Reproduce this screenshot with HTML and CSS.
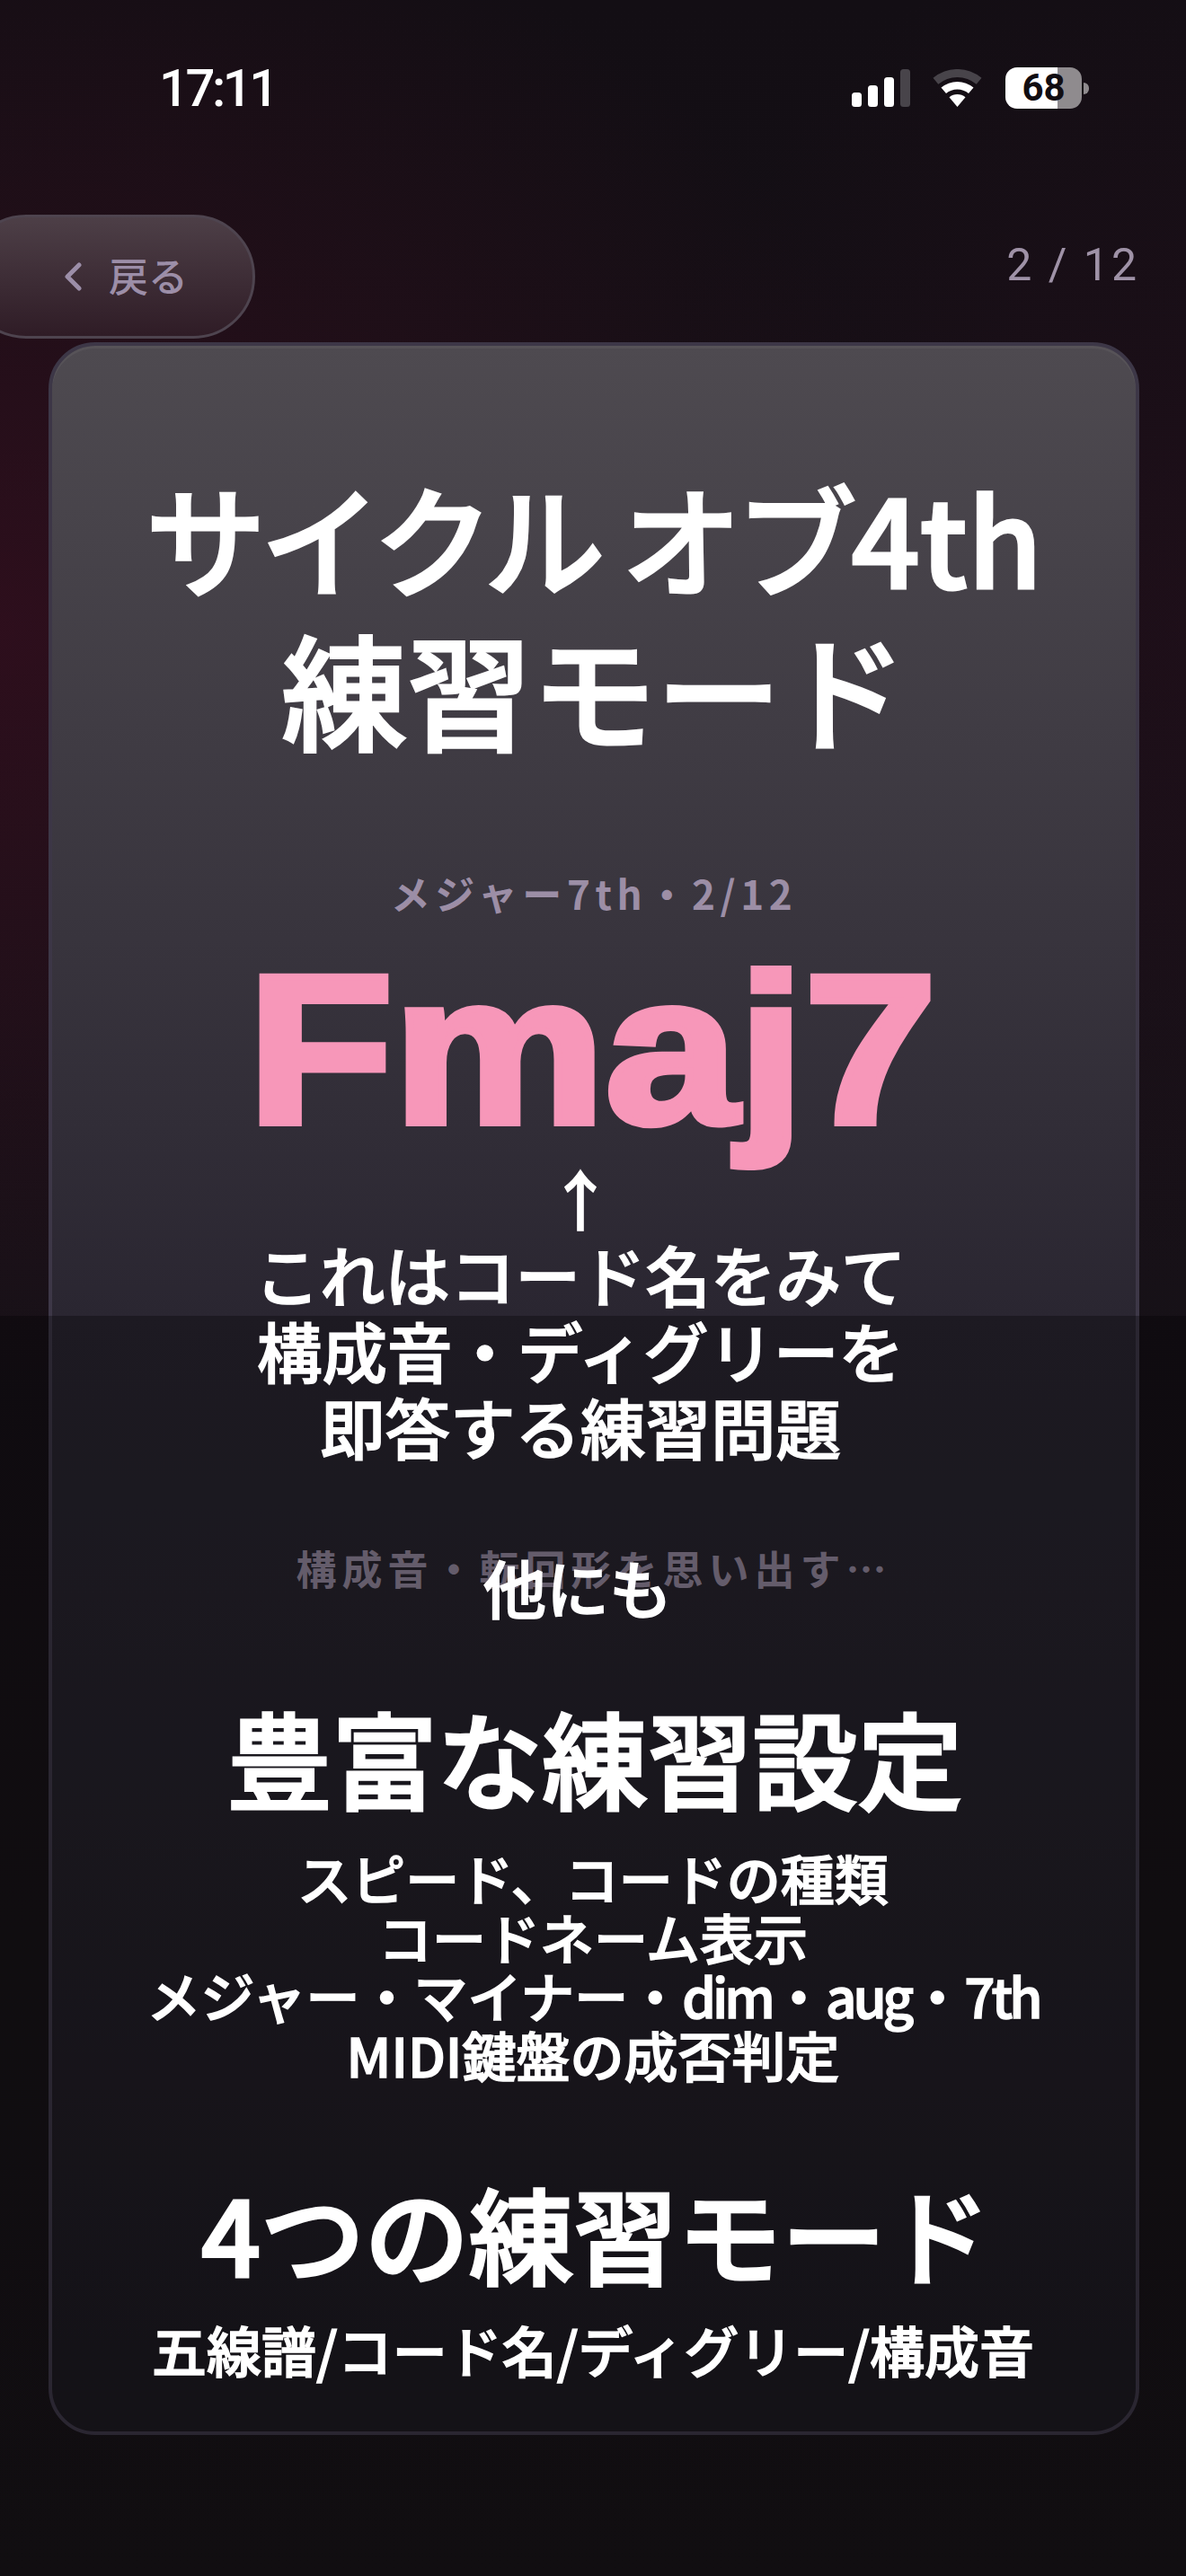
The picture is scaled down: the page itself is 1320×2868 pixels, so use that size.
FILE: index.html
```html
<!DOCTYPE html>
<html lang="ja">
<head>
<meta charset="utf-8">
<title>サイクルオブ4th 練習モード</title>
<link rel="stylesheet" href="styles.css">
</head>
<body>
<div class="page">
  <header class="status">
    <span class="time">17:11</span>
    <div class="status-icons">
      <svg class="signal" viewBox="0 0 65 42" aria-hidden="true">
        <rect x="0" y="26" width="11" height="16" rx="3.5" fill="#fff"/>
        <rect x="18" y="18" width="11" height="24" rx="3.5" fill="#fff"/>
        <rect x="36" y="9" width="11" height="33" rx="3.5" fill="#fff"/>
        <rect x="54" y="0" width="11" height="42" rx="3.5" fill="#48444a"/>
      </svg>
      <svg class="wifi" viewBox="0 0 55 42" aria-hidden="true">
        <path d="M.5 9.8A42 42 0 0 1 54.5 9.8L48.7 16.7A33 33 0 0 0 6.3 16.7Z" fill="#48444a"/>
        <path d="M9.5 20.6A28 28 0 0 1 45.5 20.6L40 27.1A19.5 19.5 0 0 0 15 27.1Z" fill="#fff"/>
        <path d="M18.5 31.3A14 14 0 0 1 36.5 31.3L27.5 42Z" fill="#fff"/>
      </svg>
      <div class="battery"><span class="battery-level">68</span></div>
    </div>
  </header>

  <nav class="nav">
    <button class="back" type="button">
      <svg class="chevron" viewBox="0 0 20 32" aria-hidden="true"><path d="M17 3 4 16l13 13" fill="none" stroke="currentColor" stroke-width="5" stroke-linecap="round" stroke-linejoin="round"/></svg>
      <span class="back-label">戻る</span>
    </button>
    <span class="counter">2 / 12</span>
  </nav>

  <main class="card">
    <h1 class="title"><span class="title-one"><span class="tight">サイクル オブ</span>4th</span><br>練習モード</h1>
    <p class="sub">メジャー7th・2/12</p>
    <p class="chord"><span class="chord-name">Fmaj7</span></p>
    <p class="prompt">構成音・転回形を思い出す…</p>
  </main>

  <div class="dim"></div>

  <div class="captions">
    <p class="cap cap-explain">↑<br>これはコード名をみて<br>構成音・ディグリーを<br>即答する練習問題</p>
    <p class="cap cap-also">他にも</p>
    <p class="cap cap-head">豊富な練習設定</p>
    <p class="cap cap-list">スピード、コードの種類<br>コードネーム表示<br>メジャー・マイナー・<span class="latin">dim</span>・<span class="latin">aug</span>・<span class="latin">7th</span><br>MIDI鍵盤の成否判定</p>
    <p class="cap cap-head cap-head-modes">4つの練習モード</p>
    <p class="cap cap-modes">五線譜/コード名/ディグリー/構成音</p>
  </div>
</div>
</body>
</html>
```

FILE: styles.css
```css
* { box-sizing: border-box; }
html, body { margin: 0; padding: 0; }
body { background: #120e13; }
p, h1 { margin: 0; }

.page {
  position: relative;
  width: 1320px;
  height: 2868px;
  overflow: hidden;
  font-family: "Noto Sans CJK JP", "Noto Sans", sans-serif;
  color: #fff;
  background:
    radial-gradient(ellipse 1050px 850px at 0 700px, rgba(66, 14, 34, .55), transparent 100%),
    radial-gradient(ellipse 620px 800px at 1320px 700px, rgba(48, 14, 32, .35), transparent 100%),
    linear-gradient(180deg, #130e14 0%, #161117 50%, #191519 100%);
}

.status {
  height: 239px;
  padding: 66px 108px 0 177px;
  display: flex;
  justify-content: space-between;
  align-items: flex-start;
}
.time {
  font-family: Roboto, "Liberation Sans", sans-serif;
  font-weight: 500;
  font-size: 58px;
  line-height: 64px;
  letter-spacing: -3.5px;
}
.status-icons {
  display: flex;
  align-items: center;
  height: 46px;
  margin-top: 9px;
}
.signal { width: 65px; height: 42px; margin-right: 25px; }
.wifi { width: 55px; height: 42px; margin-right: 26px; }
.battery {
  position: relative;
  width: 85px;
  height: 46px;
  border-radius: 13px;
  background: linear-gradient(90deg, #fff 68%, #8f8b8e 68%);
  display: flex;
  align-items: center;
  justify-content: center;
  margin-right: 8px;
}
.battery::after {
  content: "";
  position: absolute;
  right: -8px;
  top: 17px;
  width: 6px;
  height: 13px;
  border-radius: 0 6px 6px 0;
  background: #8f8b8e;
}
.battery-level {
  font-family: Roboto, "Liberation Sans", sans-serif;
  font-weight: 700;
  font-size: 42px;
  line-height: 46px;
  color: #110d12;
}

.nav {
  height: 142px;
  display: flex;
  justify-content: space-between;
  align-items: flex-start;
  padding-right: 52px;
}
.back {
  width: 324px;
  height: 138px;
  margin-left: -40px;
  padding: 0 0 0 108px;
  display: flex;
  align-items: center;
  gap: 30px;
  border: 3px solid #4e444f;
  border-radius: 69px;
  background: linear-gradient(180deg, #4d3f47, #2f1c26);
  color: #9c8ea8;
  font-family: inherit;
  font-weight: 500;
  font-size: 44px;
}
.chevron { width: 20px; height: 32px; }
.back-label { margin-top: -5px; }
.counter {
  margin-top: 30px;
  font-family: Roboto, "Liberation Sans", sans-serif;
  font-weight: 400;
  font-size: 50px;
  line-height: 52px;
  letter-spacing: 3px;
  color: #9f92a7;
}

.card {
  height: 2330px;
  margin: 0 52px 0 54px;
  padding-top: 126px;
  border: 4px solid #3d3747;
  border-radius: 52px;
  background: linear-gradient(180deg, #4e4a50 0%, #2a2631 46.5%, #1d1a21 100%);
  box-shadow: inset 0 3px 0 rgba(255, 255, 255, .05);
  text-align: center;
}
.title {
  font-weight: 500;
  font-size: 139px;
  line-height: 167px;
  white-space: nowrap;
  -webkit-text-stroke: 3px #fff;
}
.title-one { font-size: 134px; }
.tight { letter-spacing: -6px; }
.sub {
  margin-top: 116px;
  font-weight: 700;
  font-size: 44px;
  line-height: 60px;
  letter-spacing: 5.6px;
  color: #9c8ea6;
}
.chord {
  margin: 19px 4px 0 0;
  font-family: "Liberation Sans", Arial, sans-serif;
  font-weight: 700;
  font-size: 236px;
  line-height: 250px;
  color: #f797b9;
}
.chord-name {
  display: inline-block;
  transform: scaleX(1.125);
  -webkit-text-stroke: 8px #f797b9;
}
.prompt {
  margin-top: 423px;
  font-weight: 700;
  font-size: 45px;
  line-height: 60px;
  letter-spacing: 6px;
  color: #90849a;
}

.dim {
  position: absolute;
  left: 0;
  right: 0;
  top: 1465px;
  bottom: 0;
  background: rgba(0, 0, 0, .3);
}

.captions {
  position: absolute;
  left: 0;
  right: 0;
  top: 0;
  display: flex;
  flex-direction: column;
  align-items: center;
  padding-top: 1290px;
}
.cap {
  font-weight: 500;
  text-align: center;
  white-space: nowrap;
  -webkit-text-stroke: 1.5px #fff;
}
.cap-explain {
  font-size: 72.5px;
  line-height: 85px;
  margin-right: 28px;
}
.cap-also {
  margin-top: 94px;
  margin-right: 34px;
  font-size: 70px;
  line-height: 85px;
}
.cap-head {
  margin-top: 71px;
  margin-left: 4px;
  font-size: 117px;
  line-height: 150px;
  -webkit-text-stroke: 3px #fff;
}
.cap-list {
  margin-top: 27px;
  font-size: 60px;
  line-height: 65.5px;
}
.latin { letter-spacing: -4px; }
.cap-head-modes { margin-top: 90px; margin-left: 6px; font-size: 116px; }
.cap-modes {
  margin-top: 17px;
  font-size: 61px;
  line-height: 80px;
}
```
